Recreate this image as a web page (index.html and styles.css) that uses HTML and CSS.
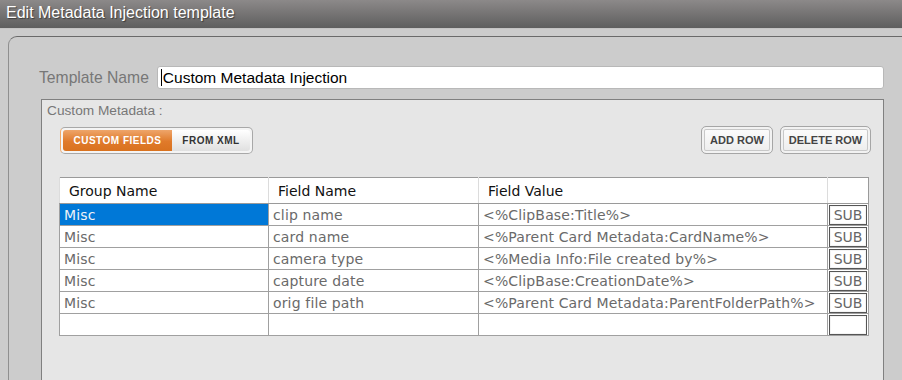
FILE: index.html
```html
<!doctype html>
<html lang="en">
  <head>
    <meta charset="UTF-8" />
    <title>Edit Metadata Injection template</title>
    <link rel="stylesheet" href="styles.css">
  </head>
  <body>
    <div class="titlebar">Edit Metadata Injection template</div>

    <div class="panel">
      <div class="name-row">
        <label for="templateName">Template Name</label>
        <div class="name-input" id="templateName"><span class="caret"></span>Custom Metadata Injection</div>
      </div>

      <div class="meta-box">
        <div class="meta-label">Custom Metadata :</div>

        <div class="toolbar">
          <div class="toggle">
            <span class="seg seg-on">CUSTOM FIELDS</span>
            <span class="seg seg-off">FROM XML</span>
          </div>
          <div class="actions">
            <button class="btn btn-add">ADD ROW</button>
            <button class="btn btn-delete">DELETE ROW</button>
          </div>
        </div>

        <table class="grid">
          <colgroup>
            <col class="c-group" />
            <col class="c-field" />
            <col class="c-value" />
            <col class="c-sub" />
          </colgroup>
          <thead>
            <tr>
              <th>Group Name</th>
              <th>Field Name</th>
              <th>Field Value</th>
              <th></th>
            </tr>
          </thead>
          <tbody>
            <tr>
              <td class="selected">Misc</td>
              <td>clip name</td>
              <td>&lt;%ClipBase:Title%&gt;</td>
              <td class="sub-cell"><span class="sub">SUB</span></td>
            </tr>
            <tr>
              <td>Misc</td>
              <td>card name</td>
              <td>&lt;%Parent Card Metadata:CardName%&gt;</td>
              <td class="sub-cell"><span class="sub">SUB</span></td>
            </tr>
            <tr>
              <td>Misc</td>
              <td>camera type</td>
              <td>&lt;%Media Info:File created by%&gt;</td>
              <td class="sub-cell"><span class="sub">SUB</span></td>
            </tr>
            <tr>
              <td>Misc</td>
              <td>capture date</td>
              <td>&lt;%ClipBase:CreationDate%&gt;</td>
              <td class="sub-cell"><span class="sub">SUB</span></td>
            </tr>
            <tr>
              <td>Misc</td>
              <td>orig file path</td>
              <td>&lt;%Parent Card Metadata:ParentFolderPath%&gt;</td>
              <td class="sub-cell"><span class="sub">SUB</span></td>
            </tr>
            <tr>
              <td></td>
              <td></td>
              <td></td>
              <td class="sub-cell"><span class="sub"></span></td>
            </tr>
          </tbody>
        </table>
      </div>
    </div>
  </body>
</html>
```

FILE: styles.css
```css
html,
body {
  margin: 0;
  height: 100%;
  overflow: hidden;
}
body {
  background-color: #cccccc;
  font-family: "Liberation Sans", Arial, sans-serif;
  color: #333;
}
.titlebar {
  height: 29px;
  box-sizing: border-box;
  padding: 4px 0 0 6px;
  font-size: 16px;
  color: #fff;
  text-shadow: 1px 1px 1px rgba(0, 0, 0, 0.45);
  background: linear-gradient(#8c8989, #5e5e5e);
  border-bottom: 1px solid #c4c4c4;
}
.panel {
  margin: 7px 0 0 8px;
  width: 920px;
  height: 360px;
  box-sizing: border-box;
  padding: 29px 0 0 30px;
  border-top: 1px solid #6a6a6a;
  border-left: 1px solid #8f8f8f;
  border-top-left-radius: 9px;
}
.name-row {
  display: flex;
  align-items: center;
  width: 845px;
  gap: 8px;
}
.name-row label {
  font-size: 15.7px;
  color: #777;
}
.name-input {
  flex: 1;
  height: 23px;
  box-sizing: border-box;
  padding: 1px 3px;
  background-color: #fff;
  border: 1px solid #b8b8b8;
  border-radius: 3px;
  font-size: 15.5px;
  color: #000;
  line-height: 19px;
}
.caret {
  display: inline-block;
  width: 1px;
  height: 17px;
  margin-right: 1px;
  background-color: #000;
  vertical-align: -3px;
}
.meta-box {
  margin: 10px 0 0 2px;
  width: 843px;
  height: 300px;
  box-sizing: border-box;
  padding: 3px 12px 0 0;
  background-color: #e6e6e6;
  border: 1px solid #808080;
}
.meta-label {
  padding-left: 5px;
  font-size: 13.7px;
  color: #777;
}
.toolbar {
  display: flex;
  justify-content: space-between;
  align-items: center;
  margin: 8px 0 0 18px;
}
.toggle {
  display: flex;
  padding: 2px;
  border: 1px solid #a8a8a8;
  border-left-color: #f0a868;
  border-radius: 5px;
  background: #f4f4f4;
  box-shadow: 0 0 0 1px #e6e6e6;
}
.seg {
  height: 21px;
  line-height: 21px;
  font-size: 10px;
  font-weight: bold;
  letter-spacing: 0.5px;
}
.seg-on {
  width: 109px;
  text-align: center;
  color: #fff;
  background: linear-gradient(#eea56a, #e07a2a 55%, #d9721f);
  border-radius: 3px 0 0 3px;
}
.seg-off {
  width: 78px;
  text-align: center;
  color: #333;
  background: linear-gradient(#ffffff, #ececec 60%, #e0e0e0);
  border-radius: 0 3px 3px 0;
}
.actions {
  display: flex;
  gap: 7px;
}
.btn {
  height: 28px;
  padding: 0;
  white-space: nowrap;
  font-family: "Liberation Sans", Arial, sans-serif;
  font-size: 11px;
  font-weight: bold;
  color: #444;
  background: linear-gradient(#fdfdfd, #ececec);
  border: 1px solid #a6a6a6;
  border-radius: 5px;
  box-shadow: inset 0 0 0 2px #f2f2f2, inset 0 0 0 3px #c8c8c8;
}
.btn-add {
  width: 72px;
}
.btn-delete {
  width: 91px;
}
.grid {
  margin: 23px 0 0 17px;
  width: 809px;
  border-collapse: collapse;
  table-layout: fixed;
  font-family: "DejaVu Sans", Verdana, sans-serif;
  font-size: 14px;
  background-color: #fff;
  border: 1px solid #9a9a9a;
}
.c-group {
  width: 209px;
}
.c-field {
  width: 210px;
}
.c-value {
  width: 349px;
}
.c-sub {
  width: 41px;
}
.grid th {
  height: 25px;
  padding: 0 0 0 9px;
  text-align: left;
  font-weight: normal;
  color: #111;
  border-left: 1px solid #dcdcdc;
  border-bottom: 1px solid #9a9a9a;
}
.grid td {
  height: 21px;
  padding: 0 0 0 4px;
  color: #6a6a6a;
  letter-spacing: 0.15px;
  white-space: nowrap;
  overflow: hidden;
  border: 1px solid #a0a0a0;
}
.grid td.selected {
  background-color: #0078d7;
  color: #eef2f7;
}
.grid td.sub-cell {
  padding: 0 1px;
  letter-spacing: 0;
}
.sub {
  display: block;
  height: 18px;
  line-height: 18px;
  text-align: center;
  color: #666;
  border: 1px solid #555;
  box-shadow: inset 0 0 0 1px #f4f4f4;
}
```
